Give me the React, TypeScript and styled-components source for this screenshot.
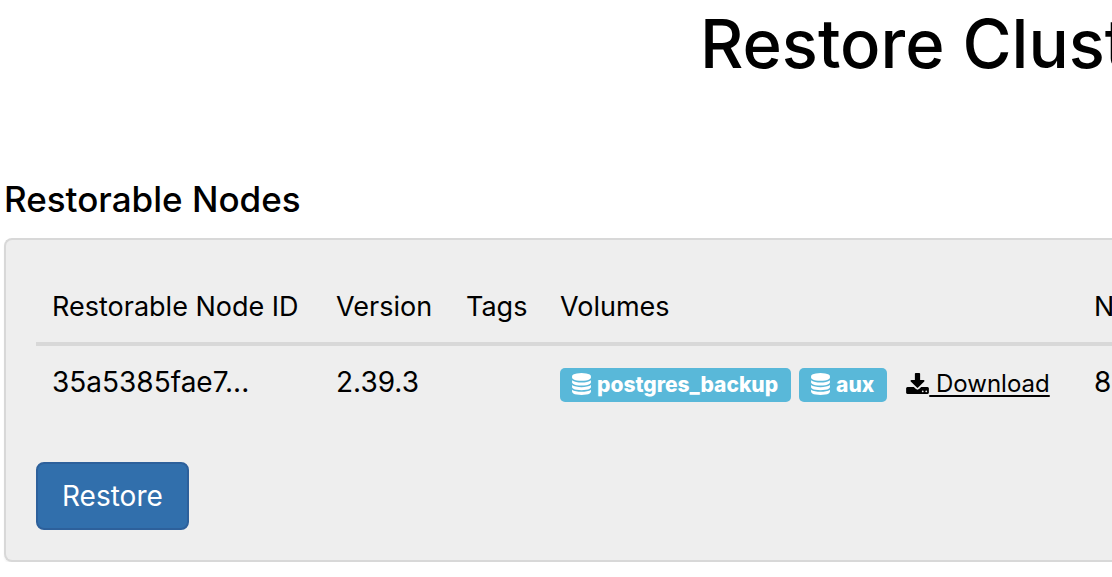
import React from "react";
import styled, { createGlobalStyle } from "styled-components";

const GlobalStyle = createGlobalStyle`
  * { box-sizing: border-box; }
  body {
    margin: 0;
    background: #fff;
    color: #000;
    font-family: Inter, "Liberation Sans", sans-serif;
    font-size: 28px;
    line-height: 40px;
  }
`;

const Page = styled.main`
  padding-left: 4px;
  overflow: hidden;
`;

const Title = styled.h1`
  margin: 0;
  padding: 4px 0 0 696px;
  font-size: 67px;
  font-weight: 500;
  line-height: 80px;
  white-space: nowrap;
`;

const SectionTitle = styled.h3`
  margin: 95px 0 19px;
  font-size: 35px;
  font-weight: 500;
  line-height: 40px;
`;

const Panel = styled.section`
  padding: 30px 0 30px 30px;
  background: #eee;
  border: 2px solid #d8d8d8;
  border-right: 0;
  border-radius: 8px 0 0 8px;
  box-shadow: 0 2px 2px rgba(0, 0, 0, 0.05);
`;

const NodeTable = styled.table`
  width: 100%;
  margin-bottom: 44px;
  border-collapse: separate;
  border-spacing: 0;
  table-layout: fixed;
`;

const Column = styled.col<{ $width?: number }>`
  width: ${({ $width }) => ($width ? `${$width}px` : "auto")};
`;

const HeadCell = styled.th`
  padding: 17px 0 15px 16px;
  border-bottom: 4px solid #d8d8d8;
  font-size: 27px;
  font-weight: 400;
  text-align: left;
  white-space: nowrap;
`;

const Cell = styled.td`
  height: 72px;
  padding: 16px 0 16px 16px;
  font-size: 28px;
  white-space: nowrap;
  vertical-align: top;
`;

const Volumes = styled.div`
  display: flex;
  align-items: center;
  gap: 8px;
  padding-top: 6px;
`;

const Label = styled.span`
  display: inline-flex;
  align-items: center;
  gap: 6px;
  height: 34px;
  padding: 0 13px 0 12px;
  border-radius: 5px;
  background: #59b8d9;
  color: #fff;
  font-size: 21px;
  font-weight: 800;
  line-height: 34px;
`;

const DownloadLink = styled.a`
  display: inline-flex;
  align-items: center;
  margin-left: 11px;
  padding-bottom: 2px;
  color: #000;
  font-size: 24px;
  line-height: 32px;
  text-decoration: none;
`;

const LinkText = styled.span`
  white-space: pre;
  text-decoration: underline;
  text-decoration-thickness: 2px;
  text-underline-offset: 3px;
`;

const Icon = styled.svg`
  flex: none;
  margin-bottom: 2px;
  fill: currentColor;
`;

const RestoreButton = styled.button`
  display: block;
  height: 68px;
  padding: 0 24px;
  border: 2px solid #2d609b;
  border-radius: 8px;
  background: #316fac;
  color: #fff;
  font-family: inherit;
  font-size: 28px;
  line-height: 40px;
  cursor: pointer;
`;

function DatabaseIcon() {
  return (
    <Icon width="19" height="22" viewBox="0 0 1536 1792" aria-hidden="true">
      <path d="M768 768q237 0 443-43t325-127v170q0 69-103 128t-280 93.500-385 34.500-385-34.500-280-93.500-103-128v-170q119 84 325 127t443 43zm0 768q237 0 443-43t325-127v170q0 69-103 128t-280 93.500-385 34.500-385-34.500-280-93.500-103-128v-170q119 84 325 127t443 43zm0-384q237 0 443-43t325-127v170q0 69-103 128t-280 93.500-385 34.500-385-34.500-280-93.500-103-128v-170q119 84 325 127t443 43zm0-1152q208 0 385 34.500t280 93.500 103 128v128q0 69-103 128t-280 93.500-385 34.500-385-34.500-280-93.500-103-128v-128q0-69 103-128t280-93.500 385-34.500z" />
    </Icon>
  );
}

function DownloadIcon() {
  return (
    <Icon width="23" height="21" viewBox="0 0 1664 1536" aria-hidden="true">
      <path d="M1280 1344q0-26-19-45t-45-19-45 19-19 45 19 45 45 19 45-19 19-45zm256 0q0-26-19-45t-45-19-45 19-19 45 19 45 45 19 45-19 19-45zm128-224v320q0 40-28 68t-68 28h-1472q-40 0-68-28t-28-68v-320q0-40 28-68t68-28h465l135 136q58 56 136 56t136-56l136-136h464q40 0 68 28t28 68zm-325-569q17 41-14 70l-448 448q-18 19-45 19t-45-19l-448-448q-31-29-14-70 17-39 59-39h256v-448q0-26 19-45t45-19h256q26 0 45 19t19 45v448h256q42 0 59 39z" />
    </Icon>
  );
}

const nodes = [
  { id: "35a5385fae7...", version: "2.39.3", tags: "", volumes: ["postgres_backup", "aux"], count: "8" },
];

export default function App() {
  return (
    <>
      <GlobalStyle />
      <Page>
        <Title>Restore Clust</Title>
        <SectionTitle>Restorable Nodes</SectionTitle>
        <Panel>
          <NodeTable>
            <colgroup>
              <Column $width={284} />
              <Column $width={130} />
              <Column $width={94} />
              <Column $width={534} />
              <Column />
            </colgroup>
            <thead>
              <tr>
                <HeadCell>Restorable Node ID</HeadCell>
                <HeadCell>Version</HeadCell>
                <HeadCell>Tags</HeadCell>
                <HeadCell>Volumes</HeadCell>
                <HeadCell>N</HeadCell>
              </tr>
            </thead>
            <tbody>
              {nodes.map((node) => (
                <tr key={node.id}>
                  <Cell>{node.id}</Cell>
                  <Cell>{node.version}</Cell>
                  <Cell>{node.tags}</Cell>
                  <Cell>
                    <Volumes>
                      {node.volumes.map((volume) => (
                        <Label key={volume}>
                          <DatabaseIcon />
                          {volume}
                        </Label>
                      ))}
                      <DownloadLink href="#download">
                        <DownloadIcon />
                        <LinkText> Download</LinkText>
                      </DownloadLink>
                    </Volumes>
                  </Cell>
                  <Cell>{node.count}</Cell>
                </tr>
              ))}
            </tbody>
          </NodeTable>
          <RestoreButton type="button">Restore</RestoreButton>
        </Panel>
      </Page>
    </>
  );
}
